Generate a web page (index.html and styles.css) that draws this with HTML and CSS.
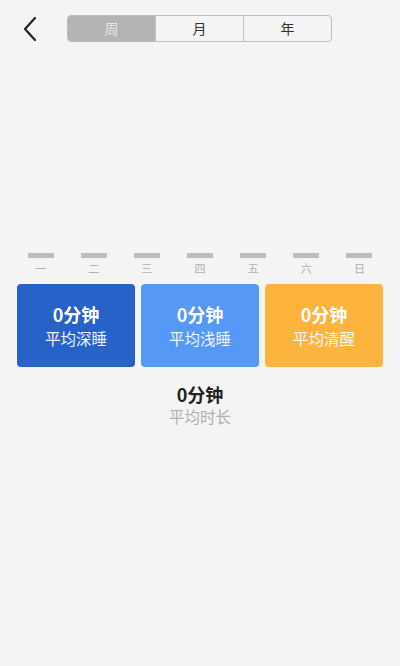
FILE: index.html
```html
<!DOCTYPE html>
<html lang="zh">
<head>
<meta charset="utf-8">
<link rel="stylesheet" href="styles.css">
</head>
<body>
<div class="page">
  <header class="top">
    <div class="back">
      <svg width="16" height="26" viewBox="0 0 16 26"><path d="M13 2 L3 13 L13 24" fill="none" stroke="#222" stroke-width="2.2" stroke-linecap="round" stroke-linejoin="round"/></svg>
    </div>
    <div class="seg">
      <div class="seg-item active">周</div>
      <div class="seg-item">月</div>
      <div class="seg-item">年</div>
    </div>
  </header>
  <div class="chart">
    <div class="day"><div class="bar"></div><div class="lbl">一</div></div>
    <div class="day"><div class="bar"></div><div class="lbl">二</div></div>
    <div class="day"><div class="bar"></div><div class="lbl">三</div></div>
    <div class="day"><div class="bar"></div><div class="lbl">四</div></div>
    <div class="day"><div class="bar"></div><div class="lbl">五</div></div>
    <div class="day"><div class="bar"></div><div class="lbl">六</div></div>
    <div class="day"><div class="bar"></div><div class="lbl">日</div></div>
  </div>
  <div class="cards">
    <div class="card deep"><div class="val">0分钟</div><div class="name">平均深睡</div></div>
    <div class="card light"><div class="val">0分钟</div><div class="name">平均浅睡</div></div>
    <div class="card awake"><div class="val">0分钟</div><div class="name">平均清醒</div></div>
  </div>
  <div class="total">
    <div class="total-val">0分钟</div>
    <div class="total-name">平均时长</div>
  </div>
</div>
</body>
</html>
```
FILE: styles.css
```css
html, body {
  margin: 0;
  padding: 0;
  background: #f4f4f4;
}
body {
  width: 400px;
  height: 666px;
  font-family: "Noto Sans CJK SC", "Noto Sans", sans-serif;
}
.page {
  display: flex;
  flex-direction: column;
}
.top {
  display: flex;
  align-items: center;
  height: 56px;
}
.back {
  width: 67px;
  display: flex;
  justify-content: flex-start;
  padding-left: 22px;
  padding-top: 1px;
  box-sizing: border-box;
}
.seg {
  display: flex;
  width: 265px;
  height: 27px;
  border: 1px solid #bcbcbc;
  border-radius: 4px;
  overflow: hidden;
  box-sizing: border-box;
}
.seg-item {
  flex: 1;
  display: flex;
  align-items: center;
  justify-content: center;
  font-size: 14px;
  color: #333;
  border-left: 1px solid #c4c4c4;
}
.seg-item:first-child {
  border-left: none;
}
.seg-item.active {
  background: #b4b4b4;
  color: #e6e6e6;
}
.chart {
  display: flex;
  justify-content: space-between;
  padding: 0 14px;
  margin-top: 197px;
}
.day {
  width: 53px;
  display: flex;
  flex-direction: column;
  align-items: center;
}
.bar {
  width: 26px;
  height: 5px;
  background: #bdbdbd;
}
.lbl {
  font-size: 11px;
  color: #b0b0b0;
  line-height: 14px;
  margin-top: 3px;
}
.cards {
  display: flex;
  gap: 6px;
  padding: 0 17px;
  margin-top: 9px;
}
.card {
  flex: 1;
  height: 83px;
  border-radius: 4px;
  display: flex;
  flex-direction: column;
  align-items: center;
  justify-content: center;
  color: #fff;
}
.card.deep { background: #2762c9; }
.card.light { background: #5598f6; }
.card.awake { background: #fdb43d; }
.val {
  font-size: 18px;
  font-weight: bold;
  line-height: 22px;
}
.name {
  font-size: 15.5px;
  line-height: 20px;
  margin-top: 3px;
  color: #f2f5fb;
}
.total {
  display: flex;
  flex-direction: column;
  align-items: center;
  margin-top: 16px;
}
.total-val {
  font-size: 18px;
  font-weight: bold;
  color: #222;
  line-height: 22px;
}
.total-name {
  font-size: 15.5px;
  color: #b0b0b0;
  line-height: 22px;
}
```
